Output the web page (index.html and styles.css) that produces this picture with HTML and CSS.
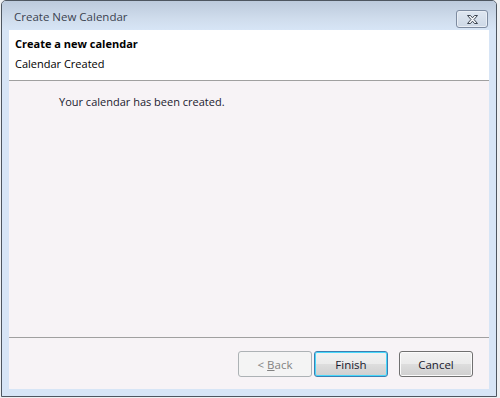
FILE: index.html
```html
<!DOCTYPE html>
<html>
<head>
<meta charset="utf-8">
<link rel="stylesheet" href="styles.css">
</head>
<body>
<div class="window">
  <div class="titlebar">
    <span class="title">Create New Calendar</span>
    <div class="close">
      <svg width="17" height="11" viewBox="0 0 17 11">
        <path d="M3.5 1.5 H6.5 L8.5 3.8 L10.5 1.5 H13.5 L10 5.5 L13.5 9.5 H10.5 L8.5 7.2 L6.5 9.5 H3.5 L7 5.5 Z" fill="#f4f6f9" stroke="#3e4753" stroke-width="1" stroke-linejoin="round"/>
      </svg>
    </div>
  </div>
  <div class="client">
    <div class="header">
      <div class="h-title">Create a new calendar</div>
      <div class="h-sub">Calendar Created</div>
    </div>
    <div class="main">
      <p class="msg">Your calendar has been created.</p>
    </div>
    <div class="footer">
      <button class="btn disabled">&lt; <u>B</u>ack</button>
      <button class="btn default">Finish</button>
      <button class="btn cancel">Cancel</button>
    </div>
  </div>
</div>
</body>
</html>
```

FILE: styles.css
```css
html, body {
  margin: 0;
  padding: 0;
}
body {
  width: 500px;
  height: 398px;
  background: #eef0f2;
  font-family: "Open Sans", "Noto Sans", sans-serif;
  font-size: 11px;
  overflow: hidden;
}
.window {
  box-sizing: border-box;
  margin-left: 1px;
  width: 496px;
  height: 397px;
  border: 1px solid #4e5660;
  border-radius: 5px 5px 0 0;
  background: #d7e5f6;
  padding: 0 7px 7px 7px;
  display: flex;
  flex-direction: column;
}
.titlebar {
  height: 29px;
  margin: 0 -7px;
  padding: 0 8px 0 12px;
  border-radius: 4px 4px 0 0;
  background: linear-gradient(#bccadc, #cfdcec 60%, #d7e5f6);
  display: flex;
  align-items: flex-start;
  justify-content: space-between;
}
.title {
  margin-top: 8px;
  color: #3b4350;
  font-size: 11.5px;
}
.close {
  box-sizing: border-box;
  margin-top: 9px;
  width: 32px;
  height: 18px;
  border: 1px solid #7d8ba0;
  border-radius: 3px;
  background: linear-gradient(#dfe7f1, #cdd8e6);
  box-shadow: inset 0 0 0 1px #e9eef5;
  display: flex;
  align-items: center;
  justify-content: center;
}
.close svg {
  display: block;
}
.client {
  flex: 1;
  display: flex;
  flex-direction: column;
  background: #f7f3f6;
}
.header {
  box-sizing: border-box;
  height: 51px;
  background: #ffffff;
  border-bottom: 1px solid #a0a0a0;
  padding: 6px 6px 0 6px;
  color: #000;
}
.h-title {
  font-weight: bold;
  line-height: 16px;
}
.h-sub {
  margin-top: 4px;
  line-height: 16px;
}
.main {
  flex: 1;
  border-bottom: 1px solid #a0a0a0;
}
.msg {
  margin: 13px 0 0 50px;
  line-height: 16px;
  color: #1a1a2e;
}
.footer {
  height: 51px;
  box-sizing: border-box;
  padding: 13px 16px 0 0;
  display: flex;
  justify-content: flex-end;
}
.btn {
  box-sizing: border-box;
  width: 74px;
  height: 26px;
  border-radius: 3px;
  font-family: inherit;
  font-size: 11.5px;
  padding: 0;
  border: 1px solid #707070;
  background: linear-gradient(#f2f2f2 0%, #ebebeb 48%, #dddddd 52%, #cfcfcf 100%);
  color: #1a1a2e;
  box-shadow: inset 0 0 0 1px #fbfbfb;
}
.btn.disabled {
  border-color: #adb2b5;
  background: #f4f4f4;
  box-shadow: none;
  color: #838383;
}
.btn.default {
  margin-left: 2px;
  border-color: #3c7fb1;
  box-shadow: inset 0 0 0 1px #48d8fb;
}
.btn.cancel {
  margin-left: 11px;
}
.btn u {
  text-decoration-thickness: 1px;
}
```
